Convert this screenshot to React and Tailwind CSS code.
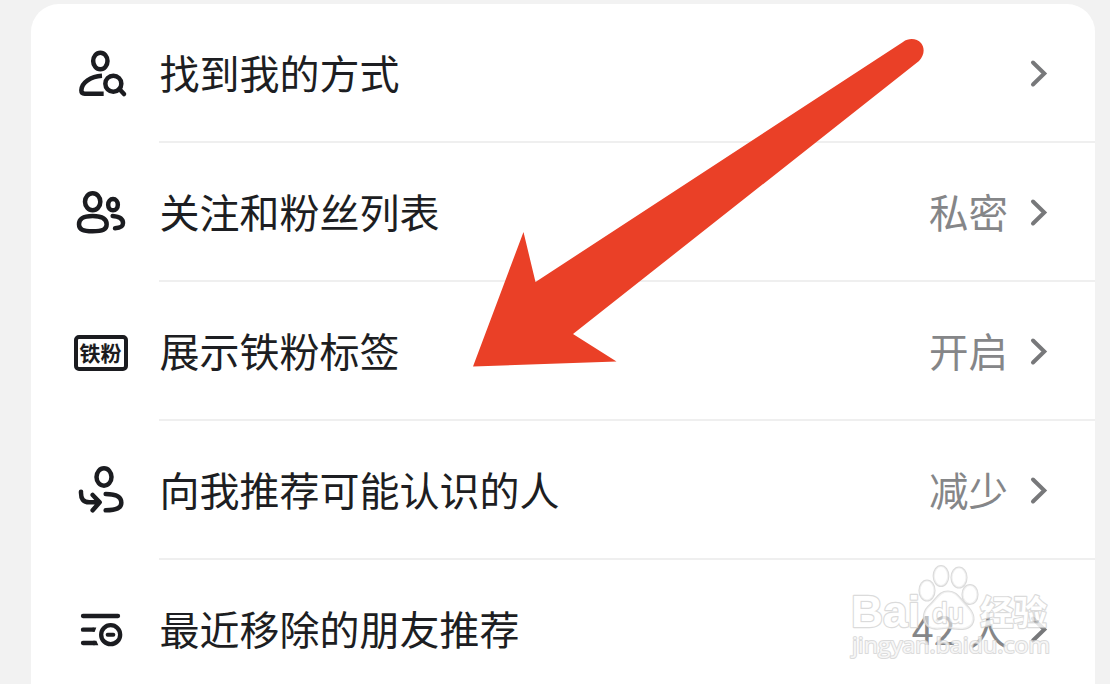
import React from 'react';

// Person with a magnifier
const FindIcon = () => (
    <svg className="w-[90px] h-[90px]" viewBox="0 -3 270 270" fill="none" stroke="#1b1c20" strokeWidth="13.5">
        <ellipse cx="121" cy="93" rx="21.500" ry="25" />
        <path d="M126 137C92 139 65 158 64 181Q64 191 74 191H131" />
        <circle cx="160" cy="161" r="24" />
        <path d="M178 177L192 192" strokeLinecap="round" />
    </svg>
);

// Two people
const FriendsIcon = () => (
    <svg className="w-[90px] h-[90px]" viewBox="0 -6 270 270" fill="none" stroke="#1b1c20" strokeWidth="13.5">
        <ellipse cx="98" cy="95" rx="23" ry="25.500" />
        <path d="M98 138C68 138 57 146 57 163C57 179 68 184 98 184S140 179 140 163C140 146 128 138 98 138Z" />
        <ellipse cx="159" cy="104" rx="14.500" ry="17" />
        <path d="M158 138C180 140 189 147 189 159C189 171 181 174 165 175" strokeLinecap="round" />
    </svg>
);

// Text badge with a thick frame
const FanBadge = () => (
    <div className="w-[90px] h-[90px] flex items-center justify-center pr-[9px] pt-[1px]">
        <div className="w-[54px] h-[36px] rounded-[5px] border-[4px] border-[#1b1c20] flex items-center justify-center text-[21px] leading-none font-bold whitespace-nowrap text-[#1b1c20]">
            铁粉
        </div>
    </div>
);

// Arrow pointing to a person
const RecommendIcon = () => (
    <svg className="w-[90px] h-[90px]" viewBox="0 -12 270 270" fill="none" stroke="#1b1c20" strokeWidth="13.5" strokeLinecap="round" strokeLinejoin="round">
        <ellipse cx="132" cy="81" rx="22.500" ry="26" />
        <path d="M137 132C170 132 184 143 184 158C184 174 170 180 137 181" />
        <path d="M63 125C62 147 70 157 88 157H118M98 135L119 157L98 181" />
    </svg>
);

// List with a minus sign
const RemovedIcon = () => (
    <svg className="w-[90px] h-[90px]" viewBox="0 -15 270 270" fill="none" stroke="#1b1c20" strokeWidth="13" strokeLinecap="round">
        <path d="M69 78H174M69 119H99M69 159H103" />
        <path d="M98 125.500H104L109 112.500H98ZM100 152.500H109L115 165.500H100Z" fill="#1b1c20" stroke="none" />
        <circle cx="152" cy="134" r="28.500" />
        <path d="M143 134H160" strokeWidth="12" />
    </svg>
);

const Chevron = () => (
    <svg className="w-[18px] h-[30px]" viewBox="0 0 18 30" fill="none" stroke="#77787a" strokeWidth="4" strokeLinecap="round">
        <path d="M3 3.500L14.300 14.500L3 25.500" />
    </svg>
);

const rows = [
    { label: '找到我的方式', value: '', Icon: FindIcon },
    { label: '关注和粉丝列表', value: '私密', Icon: FriendsIcon },
    { label: '展示铁粉标签', value: '开启', Icon: FanBadge },
    { label: '向我推荐可能认识的人', value: '减少', Icon: RecommendIcon },
    { label: '最近移除的朋友推荐', value: '42 人', Icon: RemovedIcon },
];

const Row = ({ label, value, Icon }) => (
    <div className="h-[139px] shrink-0 flex pl-[29px]">
        <div className="w-[99px] pt-[25px]">
            <Icon />
        </div>
        <div className="flex-1 flex items-center justify-between border-b-2 border-[#efefef] pt-[3px] pr-[47px]">
            <span className="pb-[5px] pl-[0.5px] text-[40px] leading-[60px] text-[#1d1e22]">{label}</span>
            <div className="flex items-center gap-[22px]">
                <span className="pb-[5px] text-[39.5px] leading-[60px] [word-spacing:4px] text-[#858688]">{value}</span>
                <Chevron />
            </div>
        </div>
    </div>
);

// Outlined letters: the stroke is painted first so that only its outer half shows
const Watermark = () => (
    <svg
        className="absolute left-[830px] top-[550px] w-[280px] h-[134px] [paint-order:stroke] font-['Open_Sans','Noto_Sans_CJK_SC',sans-serif]"
        viewBox="0 0 280 134"
        fill="#ffffff"
        stroke="#d4d4d4"
        strokeWidth="2.4"
        strokeLinejoin="round"
        opacity="0.82"
    >
        <text x="21" y="77" fontSize="45" fontWeight="700" textLength="69" lengthAdjust="spacingAndGlyphs" className="font-['Liberation_Sans',sans-serif]">Bai</text>
        <g strokeWidth="2.2" fillOpacity="0.6">
            <ellipse cx="97" cy="40.500" rx="7.500" ry="10" />
            <ellipse cx="111" cy="26" rx="7.300" ry="10" />
            <ellipse cx="129" cy="27.500" rx="7.500" ry="10" />
            <ellipse cx="140" cy="44.500" rx="7.500" ry="9.500" />
            <path d="M118 41.500C109 41.500 107 49 100 55C94 60 92 68 96 74C100 80 109 79 118 77.500C128 79 137 81 142 74C146 67 142 61 136 55C129 48 127 41.500 118 41.500Z" />
        </g>
        <text x="102" y="73" fontSize="27" fontWeight="600" textLength="32" lengthAdjust="spacingAndGlyphs">du</text>
        <text x="150" y="75" fontSize="34" fontWeight="700" textLength="67" lengthAdjust="spacingAndGlyphs" className="font-['Noto_Sans_CJK_SC',sans-serif]">经验</text>
        <text x="22" y="103" fontSize="22.5" fontWeight="400" textLength="198" lengthAdjust="spacingAndGlyphs" strokeWidth="2" fillOpacity="0.8">jingyan.baidu.com</text>
    </svg>
);

const App = () => {
    return (
        <div className="relative w-[1110px] h-[684px] overflow-hidden bg-[#f2f2f2] pt-[4px] pl-[31px] pr-[15px] font-['Noto_Sans_CJK_SC',sans-serif]">
            <div className="h-[700px] flex flex-col rounded-t-[28px] bg-white">
                {rows.map((row) => (
                    <Row key={row.label} {...row} />
                ))}
            </div>

            {/* Red pointer arrow */}
            <svg className="absolute left-0 top-0 w-[1110px] h-[684px] pointer-events-none" viewBox="0 0 1110 684">
                <path
                    d="M473 366.500L523.500 232L535.500 282L903 42C909 37.500 917 38.500 921 43C925 48 924.500 55 919 61L573 334L616.500 361.500Z"
                    fill="#ea4027"
                />
            </svg>

            <Watermark />
        </div>
    );
};

export default App;
